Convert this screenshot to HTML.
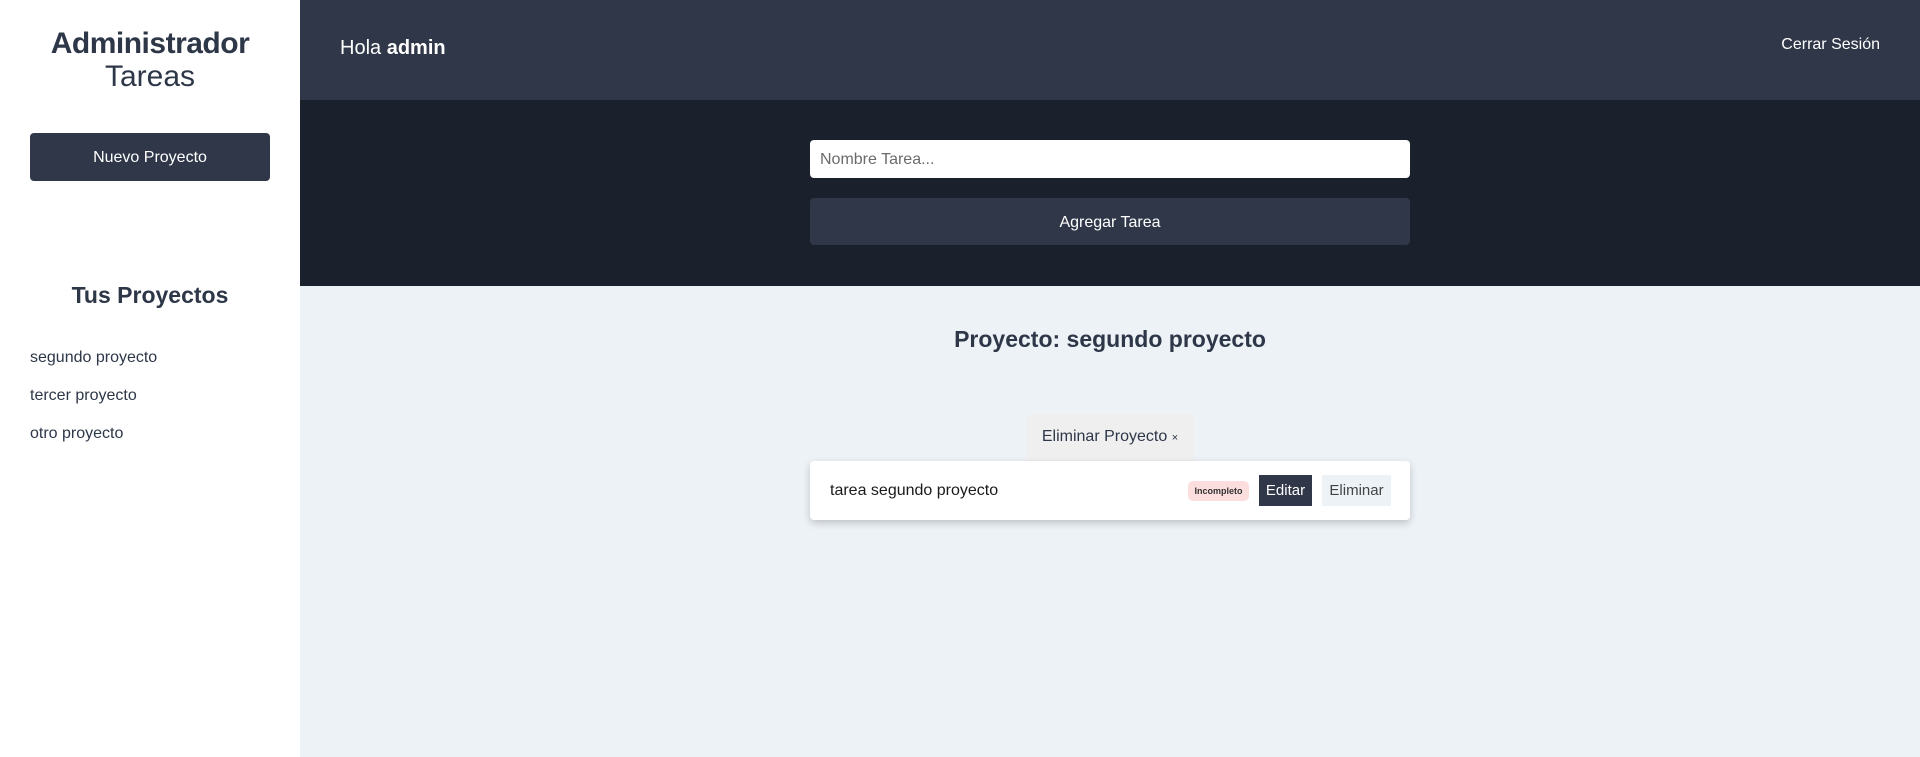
<!DOCTYPE html>
<html><head><meta charset="utf-8"><style>
*{margin:0;padding:0;box-sizing:border-box}
body{width:1920px;height:757px;overflow:hidden;font-family:"Liberation Sans",sans-serif;background:#edf2f7;position:relative;color:#2d3748}
.side{position:absolute;left:0;top:0;width:300px;height:757px;background:#fff}
.t1{position:absolute;left:0;width:300px;text-align:center;top:27px;font-size:30px;font-weight:bold;color:#2d3748;letter-spacing:-0.5px}
.t2{position:absolute;left:0;width:300px;text-align:center;top:60px;font-size:30px;font-weight:300;color:#2d3748}
.nb{position:absolute;left:30px;top:133px;width:240px;height:48px;background:#2f3748;border-radius:4px;color:#fff;font-size:16px;text-align:center;line-height:50px}
.tp{position:absolute;left:0;width:300px;text-align:center;top:282px;font-size:23px;font-weight:bold}
.li{position:absolute;left:30px;font-size:16px;color:#2d3748}
.hd{position:absolute;left:300px;top:0;width:1620px;height:100px;background:#2f3748;color:#fff}
.dk{position:absolute;left:300px;top:100px;width:1620px;height:186px;background:#1b202d}
.in{position:absolute;left:810px;top:140px;width:600px;height:38px;background:#fff;border-radius:4px;font-size:16px;color:#6b6b6b;padding-left:10px;line-height:40px}
.ag{position:absolute;left:810px;top:198px;width:600px;height:47px;background:#2f3748;border-radius:4px;color:#fff;font-size:16px;text-align:center;line-height:49px}
.pt{position:absolute;left:300px;width:1620px;text-align:center;top:326px;font-size:23px;font-weight:bold}
.ep{position:absolute;left:1026px;top:414px;width:168px;height:58px;background:#efefef;font-size:16px;text-align:center;line-height:46px;border-radius:4px 4px 0 0}
.card{position:absolute;left:810px;top:461px;width:600px;height:59px;background:#fff;border-radius:4px;box-shadow:0 3px 8px rgba(0,0,0,.2)}
</style></head><body>
<div class="side">
<div class="t1">Administrador</div>
<div class="t2">Tareas</div>
<div class="nb">Nuevo Proyecto</div>
<div class="tp">Tus Proyectos</div>
<div class="li" style="top:349px">segundo proyecto</div>
<div class="li" style="top:387px">tercer proyecto</div>
<div class="li" style="top:425px">otro proyecto</div>
</div>
<div class="hd">
<div style="position:absolute;left:40px;top:37px;font-size:20px">Hola <b>admin</b></div>
<div style="position:absolute;right:40px;top:36px;font-size:16px">Cerrar Sesión</div>
</div>
<div class="dk"></div>
<div class="in">Nombre Tarea...</div>
<div class="ag">Agregar Tarea</div>
<div class="pt">Proyecto: segundo proyecto</div>
<div class="ep">Eliminar Proyecto <span style="font-size:11px">×</span></div>
<div class="card">
<div style="position:absolute;left:20px;top:21px;font-size:16px;color:#1a1a1a">tarea segundo proyecto</div>
<div style="position:absolute;left:378px;top:20px;width:61px;height:20px;background:#fddede;border-radius:5px;font-size:9px;font-weight:bold;text-align:center;line-height:20px;color:#333">Incompleto</div>
<div style="position:absolute;left:449px;top:14px;width:53px;height:31px;background:#2f3748;color:#fff;font-size:15px;text-align:center;line-height:31px">Editar</div>
<div style="position:absolute;left:512px;top:14px;width:69px;height:31px;background:#edf2f7;color:#444;font-size:15px;text-align:center;line-height:31px">Eliminar</div>
</div>
</body></html>
